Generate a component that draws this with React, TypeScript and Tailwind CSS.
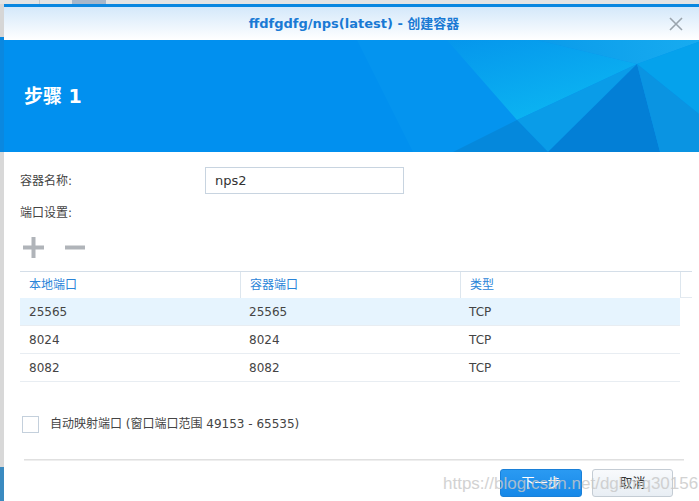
import React from 'react'

const font = { fontFamily: '"DejaVu Sans", "Noto Sans CJK SC", sans-serif' }

const ports = [
  { local: '25565', container: '25565', type: 'TCP' },
  { local: '8024', container: '8024', type: 'TCP' },
  { local: '8082', container: '8082', type: 'TCP' },
]

function Banner() {
  return (
    <div className="relative h-[112px] bg-[#0190ef] overflow-hidden">
      {/* background facets */}
      <svg className="absolute inset-0" width="700" height="112" viewBox="0 0 700 112">
        <defs>
          <linearGradient id="fa" x1="0" y1="0" x2="0.6" y2="1">
            <stop offset="0" stopColor="#0596ec" />
            <stop offset="1" stopColor="#0cb6f2" />
          </linearGradient>
          <linearGradient id="fb" x1="0" y1="0" x2="1" y2="0">
            <stop offset="0" stopColor="#0a9bea" />
            <stop offset="1" stopColor="#18acf0" />
          </linearGradient>
        </defs>
        <polygon points="353,0 700,0 700,112 409,112" fill="#0494ef" />
        <polygon points="443,0 533,0 633,24 513,80" fill="url(#fa)" />
        <polygon points="533,0 700,0 633,24" fill="url(#fb)" />
        <polygon points="633,24 700,0 700,78" fill="#05a2ec" />
        <polygon points="513,80 633,24 544,112" fill="#0a9ce8" />
        <polygon points="449,112 513,80 544,112" fill="#0588dc" />
        <polygon points="633,24 544,112 656,112" fill="#037fd6" />
        <polygon points="633,24 700,78 700,112 656,112" fill="#0a94e2" />
      </svg>
      <div className="relative h-full flex items-center pl-[20px]">
        <span className="text-white text-[19px] font-bold">步骤 1</span>
      </div>
    </div>
  )
}

function PortTable() {
  return (
    <div className="w-[672px]">
      <div className="grid grid-cols-[220px_220px_220px_12px] h-[27px] border-t border-[#d4dee8]">
        {['本地端口', '容器端口', '类型'].map((h, i) => (
          <div
            key={h}
            className={`flex items-center pl-[9px] text-[12px] text-[#2a84d8] ${i > 0 ? 'border-l border-[#dde6ee]' : ''}`}
          >
            {h}
          </div>
        ))}
        <div className="border-l border-[#dde6ee] border-b border-b-[#e4eaf0]" />
      </div>
      <div className="w-[660px]">
        {ports.map((p, i) => (
          <div
            key={p.local}
            className={`grid grid-cols-[220px_220px_220px] h-[28px] border-b border-[#e8edf2] text-[12px] text-[#444] ${i === 0 ? 'bg-[#e6f4fe]' : ''}`}
          >
            <div className="flex items-center pl-[9px]">{p.local}</div>
            <div className="flex items-center pl-[9px]">{p.container}</div>
            <div className="flex items-center pl-[9px]">{p.type}</div>
          </div>
        ))}
      </div>
    </div>
  )
}

export default function App() {
  return (
    <div className="relative w-[699px] h-[501px] overflow-hidden bg-[#dcdcdc]" style={font}>
      {/* window behind */}
      <div className="h-[4px] bg-[#e4e4e4] flex">
        <div className="w-[40px] shrink-0 border-r border-[#c8c8c8]" />
        <div className="ml-[32px] w-[34px] bg-[#6a8ab0] opacity-50" />
      </div>
      <div className="flex h-[497px]">
        <div className="w-[4px] shrink-0 flex flex-col">
          <div className="h-[33px] bg-[#d6d6d6]" />
          <div className="h-[115px] bg-[#0a88e0]" />
          <div className="h-[315px] bg-[#d8d8d8]" />
          <div className="flex-1 bg-[#3a8ac0]" />
        </div>

        {/* dialog */}
        <div className="w-[700px] shrink-0 bg-white flex flex-col">
          <div className="h-[3px] bg-[#0a87e0]" />
          <div className="relative h-[33px] bg-gradient-to-b from-[#d4e8fa] to-[#ffffff] flex items-center justify-center">
            <span className="text-[13px] text-[#1a7ad4] font-bold">ffdfgdfg/nps(latest) - 创建容器</span>
            <svg className="absolute left-[665px] top-[10px]" width="14" height="14" viewBox="0 0 14 14">
              <path d="M1 1 L13 13 M13 1 L1 13" stroke="#9aa4ad" strokeWidth="1.6" />
            </svg>
          </div>
          <Banner />

          <div className="flex-1 flex flex-col pl-[16px] pt-[15px]">
            <div className="flex items-center h-[27px]">
              <span className="w-[185px] text-[12px] text-[#444]">容器名称:</span>
              <div className="w-[199px] h-[27px] border border-[#c8d4e0] flex items-center pl-[9px] text-[13px] text-[#333]">
                nps2
              </div>
            </div>
            <div className="mt-[10px] h-[18px] flex items-center text-[12px] text-[#444]">端口设置:</div>

            <div className="mt-[15px] flex items-center h-[21px] pl-[3px] gap-[21px]">
              <svg width="21" height="21" viewBox="0 0 21 21">
                <path d="M10.5 0 V21 M0 10.5 H21" stroke="#b0b4b9" strokeWidth="4" />
              </svg>
              <svg width="20" height="21" viewBox="0 0 20 21">
                <path d="M0 10.5 H20" stroke="#b0b4b9" strokeWidth="4" />
              </svg>
            </div>

            <div className="mt-[13px]">
              <PortTable />
            </div>

            <div className="mt-[33px] flex items-center pl-[2px] h-[18px]">
              <div className="w-[17px] h-[17px] border border-[#c4d0dc] bg-white" />
              <span className="ml-[11px] text-[12px] text-[#444]">自动映射端口 (窗口端口范围 49153 - 65535)</span>
            </div>

            <div className="mt-[26px] ml-[4px] w-[660px] h-[2px] bg-[#e0e0e0] border-b border-[#eeeeee]" />

            <div className="mt-[8px] flex pl-[480px] gap-[10px]">
              <button className="w-[82px] h-[28px] rounded-[3px] border border-[#1a80d8] bg-gradient-to-b from-[#2a9af2] to-[#1688e8] text-white text-[13px]">
                下一步
              </button>
              <button className="w-[81px] h-[28px] rounded-[3px] border border-[#c4ccd4] bg-gradient-to-b from-[#f8fafc] to-[#e8eef4] text-[#333] text-[13px]">
                取消
              </button>
            </div>
          </div>
        </div>
      </div>

      {/* watermark */}
      <div
        className="absolute left-[443px] top-[471px] text-[17px] text-[#c8c8c8] opacity-80 whitespace-nowrap"
        style={{ fontFamily: '"Liberation Sans", sans-serif' }}
      >
        https://blog.csdn.net/dgkmq30156
      </div>
    </div>
  )
}
